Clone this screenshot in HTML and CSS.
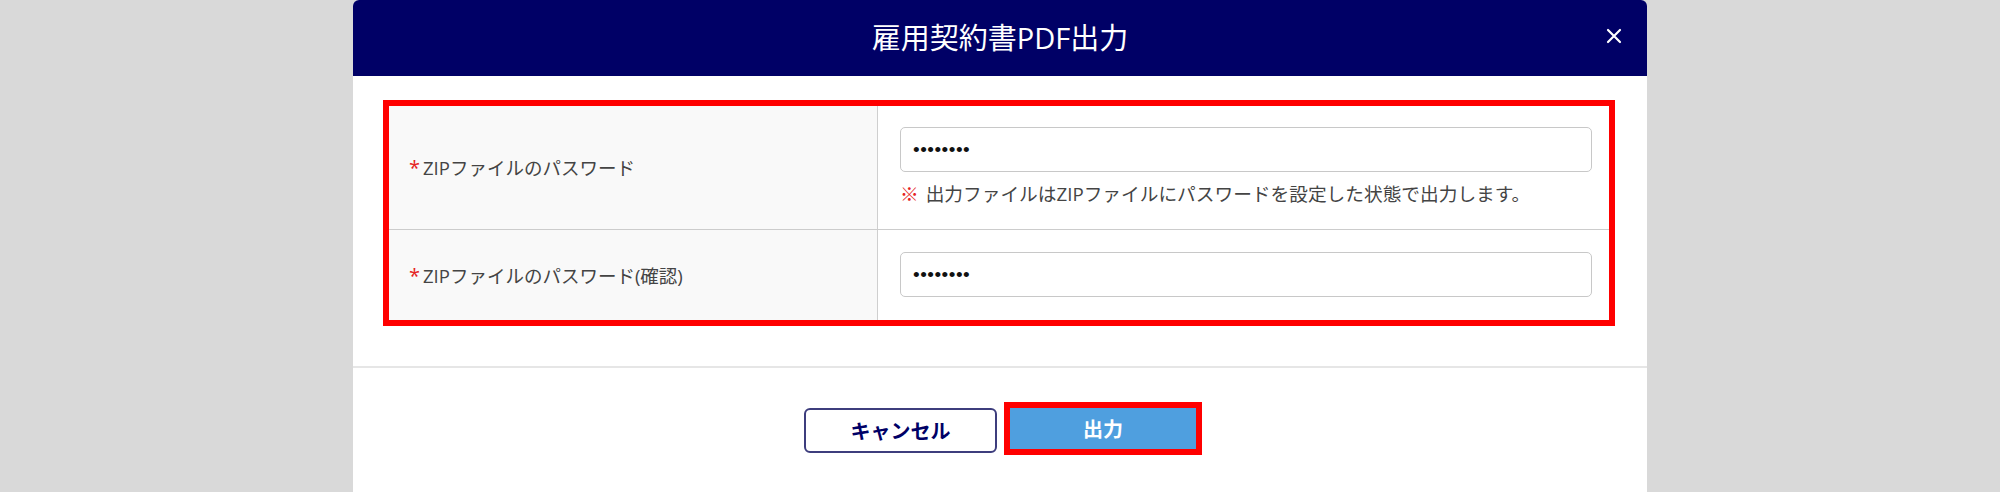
FILE: index.html
```html
<!DOCTYPE html>
<html lang="ja">
<head>
<meta charset="utf-8">
<title>雇用契約書PDF出力</title>
<link rel="stylesheet" href="styles.css">
</head>
<body>
<div class="overlay">
  <div class="modal">
    <div class="modal-header">
      <span></span>
      <h2 class="modal-title">雇用契約書PDF出力</h2>
      <button class="close-btn" type="button" aria-label="閉じる">
        <svg width="16" height="16" viewBox="0 0 16 16"><path d="M2 2 L14 14 M14 2 L2 14" stroke="#fff" stroke-width="2.2" stroke-linecap="round" fill="none"/></svg>
      </button>
    </div>
    <div class="modal-body">
      <table class="form-table">
        <tr class="row-first">
          <th class="label-cell"><span class="req">*</span>ZIPファイルのパスワード</th>
          <td class="value-cell">
            <input class="pw-input" type="password" value="12345678">
            <p class="note"><span class="note-mark">※</span>出力ファイルはZIPファイルにパスワードを設定した状態で出力します。</p>
          </td>
        </tr>
        <tr class="row-second">
          <th class="label-cell"><span class="req">*</span>ZIPファイルのパスワード(確認)</th>
          <td class="value-cell">
            <input class="pw-input" type="password" value="12345678">
          </td>
        </tr>
      </table>
    </div>
    <div class="modal-footer">
      <button class="btn btn-cancel" type="button">キャンセル</button>
      <span class="highlight"><button class="btn btn-primary" type="button">出力</button></span>
    </div>
  </div>
</div>
</body>
</html>
```

FILE: styles.css
```css
html, body {
  margin: 0;
  padding: 0;
  height: 100%;
  overflow: hidden;
}
body {
  background: #d9d9d9;
  font-family: "Open Sans", "Noto Sans CJK JP", sans-serif;
  color: #444;
}
.overlay {
  display: flex;
  justify-content: center;
  height: 100%;
}
.modal {
  width: 1294px;
  height: 100%;
  background: #fff;
  border-radius: 6px 6px 0 0;
}
.modal-header {
  height: 76px;
  background: #000066;
  border-radius: 6px 6px 0 0;
  display: grid;
  grid-template-columns: 1fr auto 1fr;
  align-items: center;
}
.modal-title {
  margin: 0;
  color: #fff;
  font-family: "Open Sans", "Noto Sans CJK JP", sans-serif;
  font-weight: 400;
  font-size: 29px;
  line-height: 76px;
}
.close-btn {
  justify-self: end;
  margin-right: 25px;
  width: 16px;
  height: 16px;
  padding: 0;
  border: 0;
  background: transparent;
  display: flex;
  margin-top: -4px;
}
.modal-body {
  padding: 24px 32px 40px 30px;
  border-bottom: 2px solid #e6e6e6;
}
.form-table {
  width: 100%;
  border-collapse: collapse;
  border: 6px solid #f00;
}
.label-cell {
  width: 468px;
  background: #f9f9f9;
  border-right: 1px solid #cfcfcf;
  text-align: left;
  font-weight: 400;
  font-size: 18.5px;
  color: #444;
  padding: 0 0 0 20px;
  vertical-align: middle;
  white-space: nowrap;
}
.req {
  color: #e52222;
  font-size: 20px;
  margin-right: 3px;
}
.row-first .label-cell,
.row-first .value-cell {
  border-bottom: 1px solid #cccccc;
}
.value-cell {
  padding: 21px 17px 22px 22px;
  vertical-align: top;
}
.row-second .value-cell {
  padding: 22px 17px 23px 22px;
}
.pw-input {
  display: block;
  box-sizing: border-box;
  width: 100%;
  height: 45px;
  margin: 0;
  padding: 0 12px;
  border: 1px solid #c8c8c8;
  border-radius: 5px;
  background: #fff;
  font-family: "Liberation Sans", sans-serif;
  font-size: 19px;
  letter-spacing: 0.5px;
  color: #111;
  outline: none;
}
.note {
  margin: 8px 0 0;
  font-size: 18.7px;
  line-height: 27px;
  color: #444;
  white-space: nowrap;
}
.note-mark {
  color: #e52222;
  font-weight: 700;
  margin-right: 7px;
}
.modal-footer {
  display: flex;
  justify-content: center;
  align-items: flex-start;
  gap: 7px;
  padding: 40px 0 0 6px;
}
.btn {
  font-family: "Open Sans", "Noto Sans CJK JP", sans-serif;
  font-weight: 700;
  font-size: 20px;
  cursor: pointer;
  margin: 0;
}
.btn-cancel {
  box-sizing: border-box;
  width: 193px;
  height: 45px;
  background: #fff;
  color: #000066;
  border: 2px solid #3d3d7d;
  border-radius: 6px;
}
.highlight {
  display: block;
  margin-top: -6px;
  border: 6px solid #f00;
}
.btn-primary {
  display: block;
  width: 186px;
  height: 41px;
  background: #4f9fdf;
  color: #fff;
  border: 0;
  border-radius: 0;
}
```
